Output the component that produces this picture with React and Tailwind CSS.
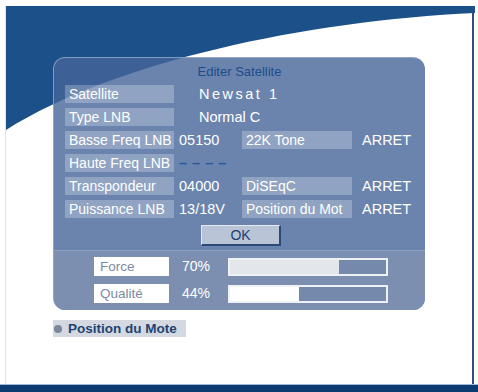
import React from 'react'

const font = { fontFamily: '"Liberation Sans", Arial, sans-serif' }

function Label({ children, className = '' }) {
  return (
    <div className={`h-[18px] whitespace-nowrap bg-white/25 pl-[4px] text-[14px] leading-[18px] text-white ${className}`}>
      {children}
    </div>
  )
}

function Row({ label, value, valueClass = 'ml-[5px]', second, secondValue }) {
  return (
    <div className="flex h-[18px] items-center">
      <Label className="ml-[11px] w-[109px]">{label}</Label>
      <div className={`text-[14.5px] leading-[18px] text-white ${valueClass}`}>{value}</div>
      {second && (
        <>
          <Label className="absolute left-[188px] w-[110px]">{second}</Label>
          <div className="absolute left-[308px] text-[14.5px] leading-[18px] text-white">{secondValue}</div>
        </>
      )}
    </div>
  )
}

function Meter({ label, value, pct, fill }) {
  return (
    <div className="flex h-[19px] items-center">
      <div className="ml-[40px] h-[19px] w-[75px] bg-white pl-[6px] text-[13.5px] leading-[19px] text-[#7d8aa3]">
        {label}
      </div>
      <div className="ml-[13px] w-[46px] text-[14px] leading-[19px] text-white">{value}</div>
      <div className="h-[18px] w-[160px] border-2 border-[#eef1f6] bg-[#7589ad]">
        <div className={`h-full ${fill}`} style={{ width: `${pct}%` }} />
      </div>
    </div>
  )
}

export default function App() {
  return (
    <div className="h-[392px] w-[478px] overflow-hidden bg-white" style={font}>
      <div className="relative ml-[5px] mt-[6px] h-[378px] w-[469px] border-l border-r-2 border-l-[#dfe2e8] border-r-[#2d4f7e] bg-white">
        <svg className="absolute inset-0" width="469" height="378" viewBox="0 0 469 378">
          <path d="M0 0 H469 V7 C300 15 110 55 0 124 Z" fill="#1b5089" />
        </svg>

        <div className="relative pt-[51px]">
          {/* panel */}
          <div className="ml-[47px] w-[372px] overflow-hidden rounded-[12px] border-l border-t border-[#9fb4d3]/70 bg-[#46659a]/80">
            <div className="relative h-[192px]">
              <div className="pt-[6px] text-center text-[13px] leading-[16px] text-[#1d4c8b]">Editer Satellite</div>
              <div className="relative mt-[5px] flex flex-col gap-[5px]">
                <Row label="Satellite" value="Newsat 1" valueClass="ml-[25px] tracking-[2.5px]" />
                <Row label="Type LNB" value="Normal C" valueClass="ml-[25px]" />
                <Row label="Basse Freq LNB" value="05150" second="22K Tone" secondValue="ARRET" />
                <Row label="Haute Freq LNB" value="– – – –" valueClass="ml-[5px] tracking-[0.5px] text-[#285a9e]! font-bold" />
                <Row label="Transpondeur" value="04000" second="DiSEqC" secondValue="ARRET" />
                <Row label="Puissance LNB" value="13/18V" second="Position du Mot" secondValue="ARRET" />
              </div>
              <div className="ml-[147px] mt-[7px] h-[21px] w-[80px] border border-b-2 border-r-2 border-[#e4e9f1] border-b-[#2c4a78] border-r-[#2c4a78] bg-[#b9c4d7] text-center text-[14px] leading-[18px] text-[#1d3f70]">
                OK
              </div>
            </div>
            <div className="flex h-[60px] flex-col gap-[8px] border-t border-[#8fa2c2] bg-[#7c8fb1] pt-[6px]">
              <Meter label="Force" value="70%" pct={70} fill="bg-[#e3e6eb]" />
              <Meter label="Qualité" value="44%" pct={44} fill="bg-white" />
            </div>
          </div>

          {/* footer hint */}
          <div className="ml-[47px] mt-[10px] flex h-[17px] w-[133px] items-center bg-[#d3d8e1]">
            <div className="ml-[1px] h-[8px] w-[8px] rounded-full bg-[#7a869c]" />
            <span className="ml-[6px] text-[13.5px] font-bold leading-[17px] text-[#1f4373]">Position du Mote</span>
          </div>
        </div>
      </div>
      <div className="h-px w-full bg-[#9fb6d6]" />
      <div className="h-[7px] w-full bg-[#0d3a73]" />
    </div>
  )
}
